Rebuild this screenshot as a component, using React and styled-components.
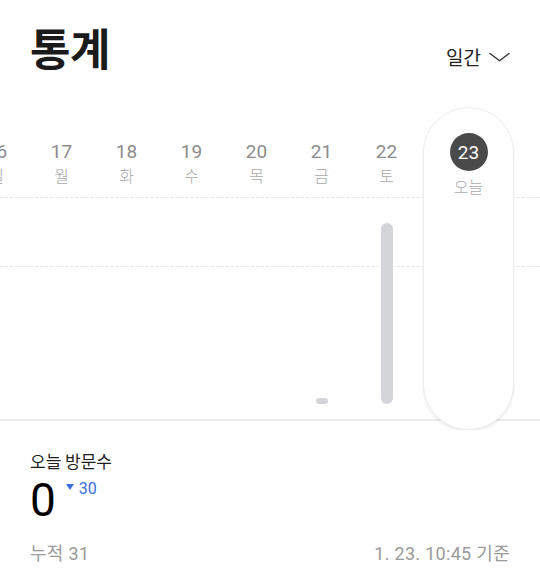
import React from "react";
import styled, { createGlobalStyle } from "styled-components";

const GlobalStyle = createGlobalStyle`
  html, body { margin: 0; padding: 0; background: #fff; }
  body { font-family: Roboto, "Noto Sans CJK KR", sans-serif; color: #222; }
  * { box-sizing: border-box; }
`;

const Page = styled.div`
  width: 540px;
  height: 571px;
  overflow: hidden;
  background: #fff;
`;

const Header = styled.header`
  display: flex;
  justify-content: space-between;
  align-items: flex-start;
  padding: 18px 30px 0 30px;
  height: 107px;
`;

const Title = styled.h1`
  margin: 0;
  font-family: "Noto Sans CJK KR", sans-serif;
  font-size: 44px;
  font-weight: 700;
  line-height: 58px;
  color: #1b1b1b;
  letter-spacing: -0.5px;
`;

const PeriodButton = styled.button`
  display: flex;
  align-items: center;
  gap: 8px;
  border: 0;
  background: none;
  padding: 0;
  margin-top: 26px;
  font-family: "Noto Sans CJK KR", sans-serif;
  font-size: 19px;
  line-height: 26px;
  color: #222;
  cursor: pointer;
`;

const Chart = styled.section`
  position: relative;
  height: 323px;
`;

const GridLine = styled.div`
  position: absolute;
  left: 0;
  right: 0;
  top: ${(p) => p.$top}px;
  border-top: ${(p) => (p.$solid ? "2px solid #ececec" : "1px dashed #e6e6e6")};
  z-index: 0;
`;

const ColumnsRow = styled.div`
  position: relative;
  z-index: 1;
  display: flex;
  justify-content: flex-end;
  height: 100%;
  padding-right: 26px;
  overflow: hidden;
`;

const DayColumn = styled.div`
  flex: 0 0 65px;
  display: flex;
  flex-direction: column;
  align-items: center;
  padding-top: 33px;
  padding-bottom: 26px;
`;

const DateNum = styled.div`
  font-family: Roboto, "Noto Sans CJK KR", sans-serif;
  font-size: 19px;
  font-weight: 400;
  line-height: 24px;
  color: #8c8c8c;
`;

const DayLabel = styled.div`
  font-family: "Noto Sans CJK KR", sans-serif;
  font-size: 16px;
  font-weight: 300;
  line-height: 22px;
  color: #a8a8a8;
`;

const BarArea = styled.div`
  flex: 1;
  display: flex;
  align-items: flex-end;
  justify-content: center;
`;

const Bar = styled.div`
  width: 12px;
  border-radius: 6px;
  background: #d4d5d9;
`;

const TodayColumn = styled.div`
  flex: 0 0 91px;
  margin-left: 4px;
  height: 323px;
  border-radius: 46px;
  border: 1px solid #ececec;
  background: #fff;
  box-shadow: 0 2px 3px rgba(0, 0, 0, 0.07);
  display: flex;
  flex-direction: column;
  align-items: center;
  padding-top: 25px;
`;

const TodayCircle = styled.div`
  width: 38px;
  height: 38px;
  border-radius: 50%;
  background: #4a4a4a;
  color: #fff;
  display: flex;
  align-items: center;
  justify-content: center;
  font-family: Roboto, sans-serif;
  font-size: 19px;
  font-weight: 400;
`;

const TodayLabel = styled(DayLabel)`
  margin-top: 4px;
  color: #ababab;
`;

const Summary = styled.section`
  padding: 19px 30px 0 30px;
`;

const SummaryTitle = styled.div`
  font-family: "Noto Sans CJK KR", sans-serif;
  font-size: 17px;
  line-height: 24px;
  color: #1e1e1e;
`;

const CountRow = styled.div`
  display: flex;
  align-items: flex-start;
  margin-top: 4px;
`;

const Count = styled.div`
  font-family: Roboto, sans-serif;
  font-size: 46px;
  line-height: 46px;
  color: #000;
`;

const Delta = styled.div`
  display: flex;
  align-items: center;
  gap: 5px;
  margin-left: 10px;
  margin-top: 3px;
  font-family: Roboto, sans-serif;
  font-size: 16px;
  line-height: 18px;
  color: #3b6fdc;
`;

const Triangle = styled.span`
  width: 0;
  height: 0;
  border-left: 4px solid transparent;
  border-right: 4px solid transparent;
  border-top: 6px solid #3b6fdc;
  margin-top: -4px;
`;

const FooterRow = styled.div`
  display: flex;
  justify-content: space-between;
  margin-top: 19px;
  font-family: Roboto, "Noto Sans CJK KR", sans-serif;
  font-size: 18px;
  line-height: 24px;
  letter-spacing: 0.3px;
  color: #9a9a9a;
`;

const days = [
  { d: 16, w: "일", h: 0 },
  { d: 17, w: "월", h: 0 },
  { d: 18, w: "화", h: 0 },
  { d: 19, w: "수", h: 0 },
  { d: 20, w: "목", h: 0 },
  { d: 21, w: "금", h: 6 },
  { d: 22, w: "토", h: 181 },
];

function Chevron() {
  return (
    <svg width="21" height="10" viewBox="0 0 21 10" fill="none">
      <path d="M1 1.5 L10.5 8.8 L20 1.5" stroke="#333" strokeWidth="1.4" strokeLinecap="round" strokeLinejoin="round" />
    </svg>
  );
}

export default function App() {
  return (
    <Page>
      <GlobalStyle />
      <Header>
        <Title>통계</Title>
        <PeriodButton>
          일간 <Chevron />
        </PeriodButton>
      </Header>
      <Chart>
        <GridLine $top={90} />
        <GridLine $top={159} />
        <GridLine $top={312} $solid />
        <ColumnsRow>
          {days.map((x) => (
            <DayColumn key={x.d}>
              <DateNum>{x.d}</DateNum>
              <DayLabel>{x.w}</DayLabel>
              <BarArea>{x.h > 0 && <Bar style={{ height: x.h }} />}</BarArea>
            </DayColumn>
          ))}
          <TodayColumn>
            <TodayCircle>23</TodayCircle>
            <TodayLabel>오늘</TodayLabel>
          </TodayColumn>
        </ColumnsRow>
      </Chart>
      <Summary>
        <SummaryTitle>오늘 방문수</SummaryTitle>
        <CountRow>
          <Count>0</Count>
          <Delta>
            <Triangle />
            30
          </Delta>
        </CountRow>
        <FooterRow>
          <span>누적 31</span>
          <span>1. 23. 10:45 기준</span>
        </FooterRow>
      </Summary>
    </Page>
  );
}
